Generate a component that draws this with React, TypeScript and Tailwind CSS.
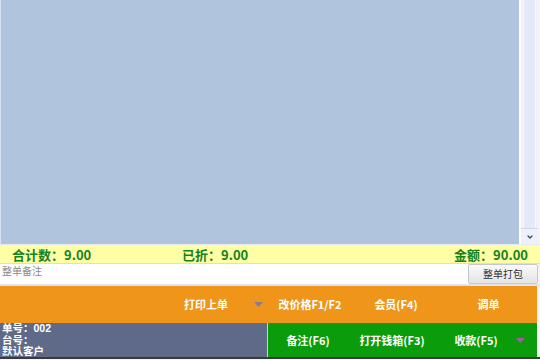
import { ChevronDown } from 'lucide-react';

const cjk = { fontFamily: '"Noto Sans CJK SC", "Liberation Sans", sans-serif' };
const tight = { fontFamily: '"Liberation Sans", "Noto Sans CJK SC", sans-serif' };

function Caret({ color }: { color: string }) {
  return (
    <svg width="9" height="5" viewBox="0 0 9 5" className="shrink-0">
      <path d="M0 0 L9 0 L4.5 5 Z" fill={color} />
    </svg>
  );
}

export default function App() {
  return (
    <div className="w-[540px] h-[360px] flex flex-col bg-[#f4f4f4] overflow-hidden" style={cjk}>
      {/* order list area */}
      <div className="h-[245px] flex border-l border-[#d8dff0] border-b border-b-[#e4e8f0]">
        <div className="flex-1 bg-[#b0c4de]" />
        <div className="w-[19px] flex flex-col bg-[#eef1fb] border-l-2 border-white">
          <div className="flex-1 mx-[2px] bg-[#e4e9fa] border-x border-[#f8f9ff]" />
          <div className="h-[16px] flex items-center justify-center border-t border-[#d0d6ea] bg-[#eef1fb]">
            <ChevronDown size={8} strokeWidth={4} className="text-[#404858]" />
          </div>
        </div>
        <div className="w-[2px] bg-[#f4f4f4]" />
      </div>

      {/* totals */}
      <div className="h-[19px] flex items-center bg-[#ffffa6] text-[#16821e] font-bold text-[13px] leading-none pl-[12px] pr-[12px] border-b border-[#e0e0c8]">
        <span className="w-[170px]">合计数：9.00</span>
        <span>已折：9.00</span>
        <span className="ml-auto">金额：90.00</span>
      </div>

      {/* remark */}
      <div className="h-[22px] flex bg-white border-b-2 border-[#dfe4ee]">
        <div className="flex-1 text-[10px] text-[#8a8a8a] pl-[2px] pt-[2px] leading-none">整单备注</div>
        <button className="w-[70px] h-full text-[10px] text-[#333] bg-gradient-to-b from-[#fafafa] to-[#e4e4e4] border border-[#c4c8d0] rounded-[2px] leading-none">
          整单打包
        </button>
        <div className="w-[2px] bg-[#f4f4f4]" />
      </div>

      {/* orange actions */}
      <div className="h-[37px] flex bg-[#ef961a] text-white text-[11px] font-bold border-r-[3px] border-[#f4f4f4]">
        <div className="w-[168px]" />
        <div className="w-[100px] flex items-center pl-[16px] gap-[26px]">
          <span>打印上单</span>
          <Caret color="#8a7a8a" />
        </div>
        <div className="w-[84px] flex items-center justify-center">改价格F1/F2</div>
        <div className="w-[88px] flex items-center justify-center">会员(F4)</div>
        <div className="flex-1 flex items-center justify-center">调单</div>
      </div>

      {/* bottom */}
      <div className="h-[36px] flex border-b-2 border-[#3a3a3a]">
        <div
          className="w-[267px] bg-[#5e6a88] text-white text-[10.5px] font-bold leading-[11.5px] pl-[2px] flex flex-col"
          style={tight}
        >
          <span>单号：002</span>
          <span>台号：</span>
          <span>默认客户</span>
        </div>
        <div className="w-[1px] bg-[#c8d0dc]" />
        <div className="flex-1 flex bg-[#0a9c0a] text-white text-[11px] font-bold">
          <div className="w-[80px] flex items-center justify-center">备注(F6)</div>
          <div className="w-[88px] flex items-center justify-center">打开钱箱(F3)</div>
          <div className="w-[80px] flex items-center justify-center">收款(F5)</div>
          <div className="flex-1 flex items-center">
            <Caret color="#a060a0" />
          </div>
        </div>
        <div className="w-[3px] bg-[#f4f4f4]" />
      </div>
    </div>
  );
}
